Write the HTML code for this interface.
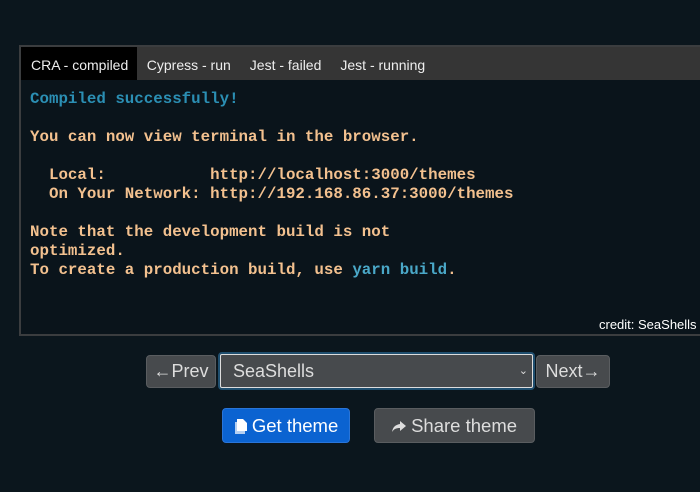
<!DOCTYPE html>
<html><head><style>
body{margin:0;width:700px;height:492px;background:#0b161d;overflow:hidden;font-family:"Liberation Sans",sans-serif;position:relative}
.box{position:absolute;left:19px;top:45px;width:700px;height:287px;border:2px solid #3b3d3f;border-right:none;background:#0a141b}
.tabs{height:33px;background:#353535;display:flex;font-size:14px;color:#eee}
.tab{padding:0 9.5px;line-height:36px}
.tab.a{background:#000;padding:0 9px 0 10px}
pre{margin:0;padding:10px 0 0 9px;font-family:"Liberation Mono",monospace;font-size:15.8px;line-height:19px;color:#f3c18f;font-weight:bold}
.c{color:#2b8fb4}.y{color:#4aa8c8}
.credit{position:absolute;top:317px;left:599px;font-size:13px;color:#fff;white-space:nowrap}
.btn{position:absolute;height:33px;box-sizing:border-box;border-radius:4px;background:#474a4d;border:1px solid #5a5d60;color:#ddd;font-size:18px;line-height:31px;text-align:center}
.sel{position:absolute;left:218px;top:352px;width:317px;height:38px;box-sizing:border-box;border:2px solid #1f4e6e;border-radius:4px;background:#474a4d;outline:1px solid #ddd;outline-offset:-3px;color:#ddd;font-size:18px;line-height:34px;padding-left:13px}
</style></head><body>
<div class="box">
<div class="tabs"><div class="tab a">CRA - compiled</div><div class="tab">Cypress - run</div><div class="tab">Jest - failed</div><div class="tab">Jest - running</div></div>
<pre><span class="c">Compiled successfully!</span>

You can now view terminal in the browser.

  Local:           http://localhost:3000/themes
  On Your Network: http://192.168.86.37:3000/themes

Note that the development build is not
optimized.
To create a production build, use <span class="y">yarn build</span>.</pre>
</div>
<div class="credit">credit: SeaShells</div>
<div class="btn" style="left:146px;top:355px;width:70px">←Prev</div>
<div class="sel">SeaShells<span style="position:absolute;right:5px;font-size:11px">⌄</span></div>
<div class="btn" style="left:536px;top:355px;width:74px">Next→</div>
<div class="btn" style="left:222px;top:408px;width:128px;height:35px;line-height:33px;background:#0b63d1;border-color:#2a75d8;color:#fff;font-size:18.5px">
<svg width="13" height="15" viewBox="0 0 13 15" style="vertical-align:-2px"><path d="M1 3h7l3 3v9H1z" fill="#fff" opacity=".7"/><path d="M3 0h6l4 4v8H3z" fill="#fff"/></svg> Get theme</div>
<div class="btn" style="left:374px;top:408px;width:161px;height:35px;line-height:33px;font-size:18.5px">
<svg width="14" height="12" viewBox="0 0 14 12" style="vertical-align:-1px"><path d="M8 0l6 5-6 5V7C4 7 2 8 0 11 1 6 3 4 8 3z" fill="#ddd"/></svg> Share theme</div>
</body></html>
